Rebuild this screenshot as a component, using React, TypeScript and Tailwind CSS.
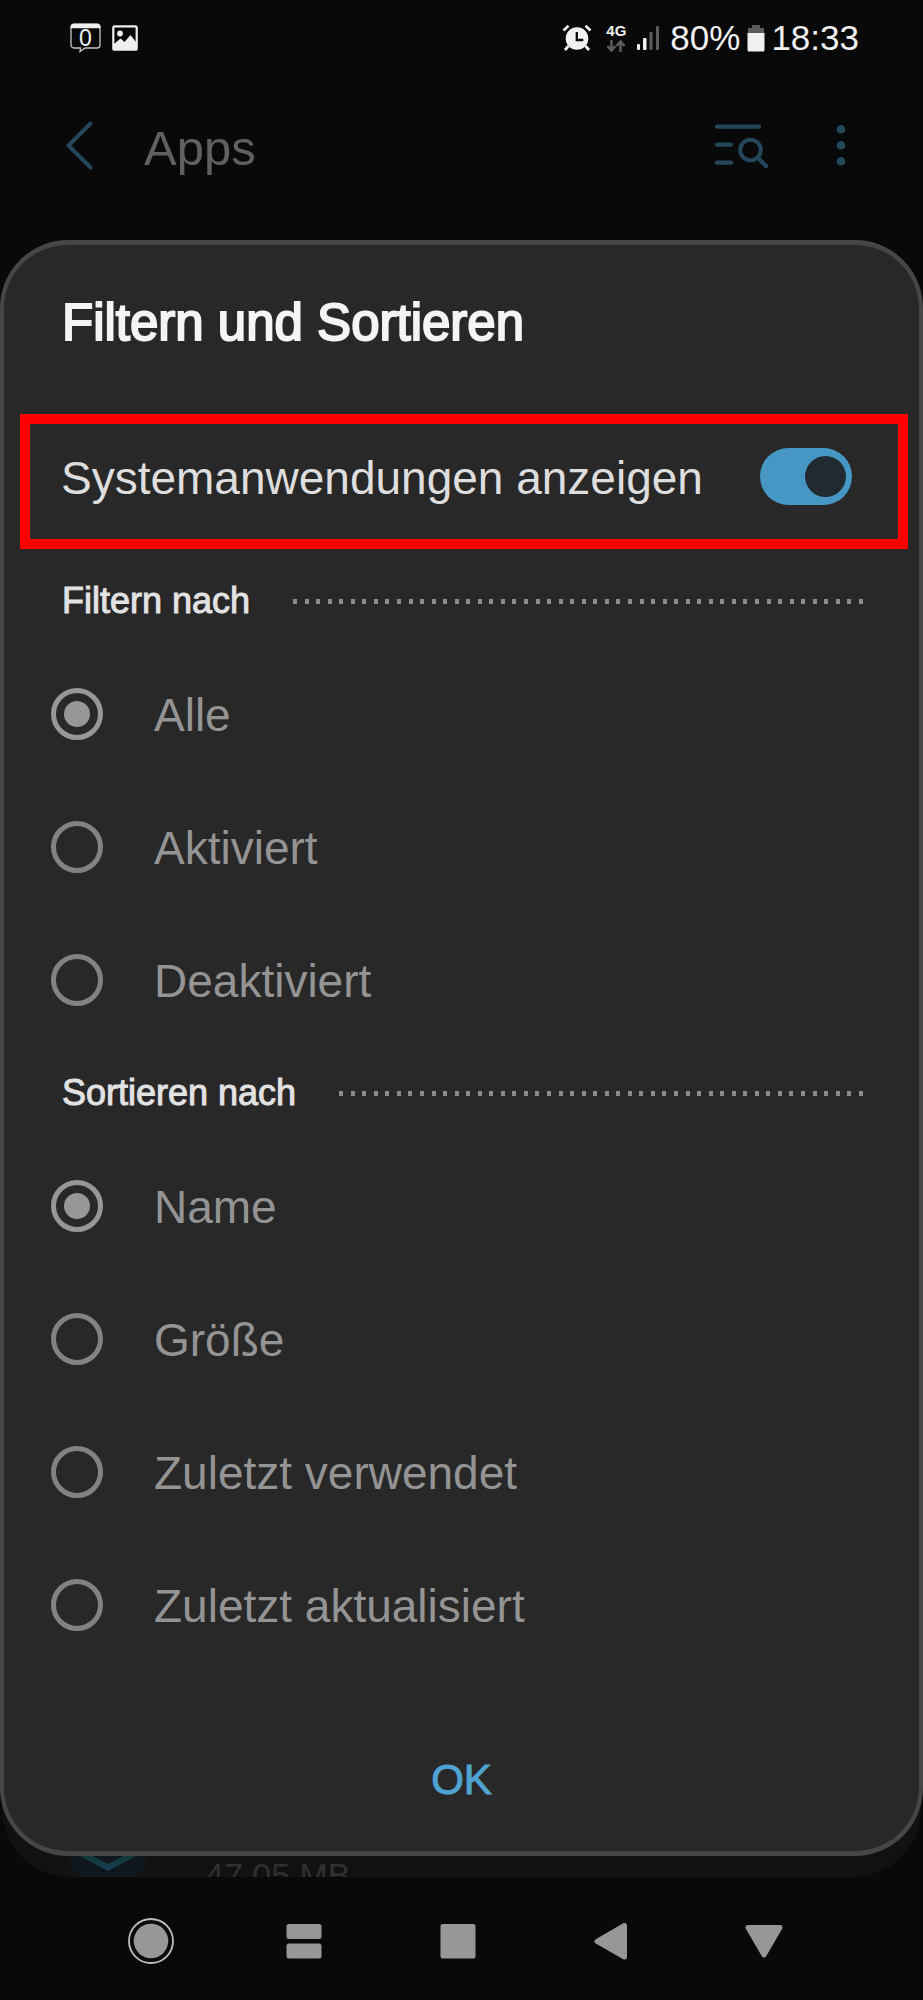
import { useState } from "react";

const filterOptions = ["Alle", "Aktiviert", "Deaktiviert"];
const sortOptions = ["Name", "Größe", "Zuletzt verwendet", "Zuletzt aktualisiert"];

function StatusBar() {
  return (
    <div className="flex h-[76px] items-center justify-between pr-[64px] pl-[70px] text-[#f0f0f0]">
      <div className="flex items-center gap-[10px]">
        <svg width="32" height="30" viewBox="0 0 32 30" aria-hidden="true">
          <path
            d="M4 1.5h23a3 3 0 0 1 3 3V22a3 3 0 0 1-3 3H15l-5 3.500.5-3.500H4a3 3 0 0 1-3-3V4.500a3 3 0 0 1 3-3Z"
            fill="none"
            stroke="#c4c4c4"
            strokeWidth="1.300"
          />
          <path d="M.5 5.200V4a3.500 3.500 0 0 1 3.500-3.500h23A3.500 3.500 0 0 1 30.500 4v1.200Z" fill="currentColor" />
          <text x="15.500" y="23" fontSize="23" textAnchor="middle" fill="currentColor">
            0
          </text>
        </svg>
        <svg width="26" height="26" viewBox="0 0 26 26" aria-hidden="true">
          <rect x="1.300" y="1.300" width="23.400" height="23.400" rx="1.500" fill="none" stroke="currentColor" strokeWidth="2.200" />
          <circle cx="8" cy="8.500" r="2.900" fill="currentColor" />
          <path d="M2 19l6.500-5.500 4 3.500 6-7L24 17v7.500H2Z" fill="currentColor" />
        </svg>
      </div>
      <div className="flex items-center">
        <svg width="30" height="28" viewBox="0 0 30 28" aria-hidden="true">
          <path d="M1.500 6.500 6.500 1.700M28.500 6.500 23.500 1.700" stroke="currentColor" strokeWidth="2.600" fill="none" />
          <path d="M6.500 22 3 26M23.500 22l3.500 4" stroke="currentColor" strokeWidth="2.800" fill="none" />
          <circle cx="15" cy="14.500" r="11.300" fill="currentColor" />
          <path d="M14.800 8v8h6.500" stroke="#090909" strokeWidth="2.300" fill="none" />
        </svg>
        <div className="ml-[12px] flex w-[24px] flex-col items-center gap-[2px]">
          <span className="text-[15px] leading-[14px] font-bold">4G</span>
          <svg width="20" height="12" viewBox="0 0 20 12" aria-hidden="true">
            <path d="M5.500 0v9.500M1.500 6l4 4.500 4-4.500M14.500 12V2M10.500 6l4-4.500 4 4.500" stroke="#5c5c5c" strokeWidth="2.500" fill="none" />
          </svg>
        </div>
        <svg className="ml-[8px]" width="24" height="26" viewBox="0 0 24 26" aria-hidden="true">
          <rect x="1" y="19" width="3" height="6" rx="1" fill="#f0f0f0" />
          <rect x="7" y="13" width="3.500" height="12" rx="1" fill="#f0f0f0" />
          <rect x="13.500" y="7" width="3" height="18" rx="1" fill="#5c5c5c" />
          <rect x="20" y="1" width="3" height="24" rx="1" fill="#5c5c5c" />
        </svg>
        <span className="ml-[10px] text-[35px] leading-[40px]">80%</span>
        <svg className="ml-[7px]" width="18" height="28" viewBox="0 0 18 28" aria-hidden="true">
          <path d="M5 1h8v3h4v5H1V4h4Z" fill="#5c5c5c" />
          <path d="M.5 9h17v17a1.500 1.500 0 0 1-1.500 1.500H2A1.500 1.500 0 0 1 .5 26Z" fill="currentColor" />
        </svg>
        <span className="ml-[6px] text-[35px] leading-[40px]">18:33</span>
      </div>
    </div>
  );
}

function AppHeader() {
  return (
    <header className="flex h-[164px] items-start pr-[65px] pl-[60px] text-[#23465a]">
      <button type="button" aria-label="Zurück" className="mt-[44px]">
        <svg width="40" height="50" viewBox="0 0 40 50" fill="none" aria-hidden="true">
          <path d="M30.500 3.500 8.500 25.500l22 22" stroke="currentColor" strokeWidth="4" strokeLinecap="round" strokeLinejoin="round" />
        </svg>
      </button>
      <h1 className="ml-[44px] mt-[42px] flex-1 text-[49px] leading-[60px] text-[#606060]">Apps</h1>
      <button type="button" aria-label="Suchen" className="mt-[44px]">
        <svg width="56" height="50" viewBox="0 0 56 50" fill="none" stroke="currentColor" strokeLinecap="round" aria-hidden="true">
          <path d="M3 6.700h42M3 24.700h14M3 42.700h14" strokeWidth="4.200" />
          <circle cx="36.500" cy="30" r="10.300" strokeWidth="4" />
          <path d="m44 38 8 8" strokeWidth="4.200" />
        </svg>
      </button>
      <button type="button" aria-label="Weitere Optionen" className="mt-[44px] ml-[54px]">
        <svg width="34" height="50" viewBox="0 0 34 50" fill="currentColor" aria-hidden="true">
          <circle cx="17" cy="9.300" r="4.300" />
          <circle cx="17" cy="25.300" r="4.300" />
          <circle cx="17" cy="41.300" r="4.300" />
        </svg>
      </button>
    </header>
  );
}

function SectionHeading({ children, dots }: { children: string; dots: number }) {
  return (
    <div className="flex items-center gap-[43px] pr-[56px] pl-[58px]">
      <h3 className="text-[36px] leading-[44px] text-[#e2e2e2] [-webkit-text-stroke:1px_#e2e2e2]">{children}</h3>
      <div className="flex flex-1 justify-between" aria-hidden="true">
        {Array.from({ length: dots }, (_, i) => (
          <span key={i} className="h-[5px] w-[4px] bg-[#8c8c8c]" />
        ))}
      </div>
    </div>
  );
}

function OptionGroup({ name, options }: { name: string; options: string[] }) {
  const [selected, setSelected] = useState(options[0]);
  return (
    <div role="radiogroup" className="mt-[24px]">
      {options.map((option) => (
        <label key={option} className="flex h-[133px] items-center gap-[51px] pl-[47px]">
          <input
            type="radio"
            name={name}
            value={option}
            checked={selected === option}
            onChange={() => setSelected(option)}
            className="grid size-[52px] shrink-0 appearance-none place-content-center rounded-full border-[5px] border-[#828282] before:size-[26px] before:rounded-full checked:border-[#979797] checked:before:bg-[#979797]"
          />
          <span className="pt-[3px] text-[46px] leading-[56px] text-[#949494]">{option}</span>
        </label>
      ))}
    </div>
  );
}

function FilterDialog() {
  const [showSystem, setShowSystem] = useState(true);
  return (
    <section
      role="dialog"
      aria-labelledby="dialog-title"
      className="relative rounded-[68px] border-x-4 border-y-[5px] border-[#464646] bg-[#282828] pt-[48px] pb-[46px]"
    >
      <h2
        id="dialog-title"
        className="pl-[58px] text-[51px] leading-[60px] text-[#f4f4f4] [-webkit-text-stroke:2px_#f4f4f4]"
      >
        Filtern und Sortieren
      </h2>
      <label className="mt-[61px] mr-[11px] mb-[30px] ml-[16px] flex h-[135px] items-center justify-between border-[10px] border-[#ff0000] pr-[46px] pb-[10px] pl-[31px]">
        <span className="pt-[2px] text-[46px] leading-[56px] text-[#dedede]">Systemanwendungen anzeigen</span>
        <input
          type="checkbox"
          role="switch"
          checked={showSystem}
          onChange={(e) => setShowSystem(e.target.checked)}
          className="flex h-[57px] w-[92px] shrink-0 appearance-none items-center rounded-full bg-[#555555] px-[6px] before:size-[41px] before:rounded-full before:bg-[#202a30] checked:justify-end checked:bg-[#4697c4]"
        />
      </label>
      <SectionHeading dots={50}>Filtern nach</SectionHeading>
      <OptionGroup name="filter" options={filterOptions} />
      <div className="h-[25px]" />
      <SectionHeading dots={46}>Sortieren nach</SectionHeading>
      <OptionGroup name="sort" options={sortOptions} />
      <div className="mt-[84px] flex justify-center">
        <button type="button" className="text-[42px] leading-[50px] text-[#4fa3d1] [-webkit-text-stroke:1px_#4fa3d1]">
          OK
        </button>
      </div>
    </section>
  );
}

function AppListCard() {
  return (
    <div className="absolute inset-x-[2px] bottom-0 flex h-[200px] items-end overflow-hidden rounded-b-[68px] bg-[#111111] pl-[67px]">
      <svg width="78" height="40" viewBox="0 0 78 40" aria-hidden="true">
        <defs>
          <linearGradient id="chevron" x1="0" y1="0" x2="0" y2="1">
            <stop offset="0.4" stopColor="#123a38" />
            <stop offset="1" stopColor="#153d52" />
          </linearGradient>
        </defs>
        <path d="M0 0h78v20c-2 9-5 15-10 20H10C5 35 2 29 0 20Z" fill="#10171c" />
        <path d="M8 14 39 30.500 70 14" fill="none" stroke="url(#chevron)" strokeWidth="6" />
      </svg>
      <div className="ml-[58px] h-[22px] text-[34px] leading-[40px] text-[#303030]">47,05 MB</div>
    </div>
  );
}

function NavigationBar() {
  return (
    <nav className="flex h-[123px] items-start pt-[40px] pr-[82px] pl-[74px] text-[#979797]">
      <button type="button" aria-label="Aufnahme" className="flex flex-1 justify-center">
        <svg width="48" height="48" viewBox="0 0 48 48" aria-hidden="true">
          <circle cx="24" cy="24" r="22" fill="none" stroke="#bdbdbd" strokeWidth="1.800" />
          <circle cx="24" cy="24" r="17.300" fill="currentColor" />
        </svg>
      </button>
      <button type="button" aria-label="Geteilter Bildschirm" className="flex flex-1 justify-center">
        <svg width="48" height="48" viewBox="0 0 48 48" fill="currentColor" aria-hidden="true">
          <rect x="6.500" y="7" width="35" height="15" rx="2.500" />
          <rect x="6.500" y="26.500" width="35" height="15" rx="2.500" />
        </svg>
      </button>
      <button type="button" aria-label="Startbildschirm" className="flex flex-1 justify-center">
        <svg width="48" height="48" viewBox="0 0 48 48" fill="currentColor" aria-hidden="true">
          <rect x="6.500" y="7" width="35" height="34.500" rx="2" />
        </svg>
      </button>
      <button type="button" aria-label="Zurück" className="flex flex-1 justify-center">
        <svg width="48" height="48" viewBox="0 0 48 48" fill="currentColor" stroke="currentColor" strokeWidth="5" strokeLinejoin="round" aria-hidden="true">
          <path d="M37.500 8.500v31.500L10 24.300Z" />
        </svg>
      </button>
      <button type="button" aria-label="Ausblenden" className="flex flex-1 justify-center">
        <svg width="48" height="48" viewBox="0 0 48 48" fill="currentColor" stroke="currentColor" strokeWidth="5" strokeLinejoin="round" aria-hidden="true">
          <path d="M8 10.500h32L24 38Z" />
        </svg>
      </button>
    </nav>
  );
}

export default function App() {
  return (
    <div className="flex min-h-screen flex-col bg-[#090909] font-['Liberation_Sans',Arial,sans-serif]">
      <StatusBar />
      <AppHeader />
      <main className="relative pb-[21px]">
        <AppListCard />
        <FilterDialog />
      </main>
      <NavigationBar />
    </div>
  );
}
